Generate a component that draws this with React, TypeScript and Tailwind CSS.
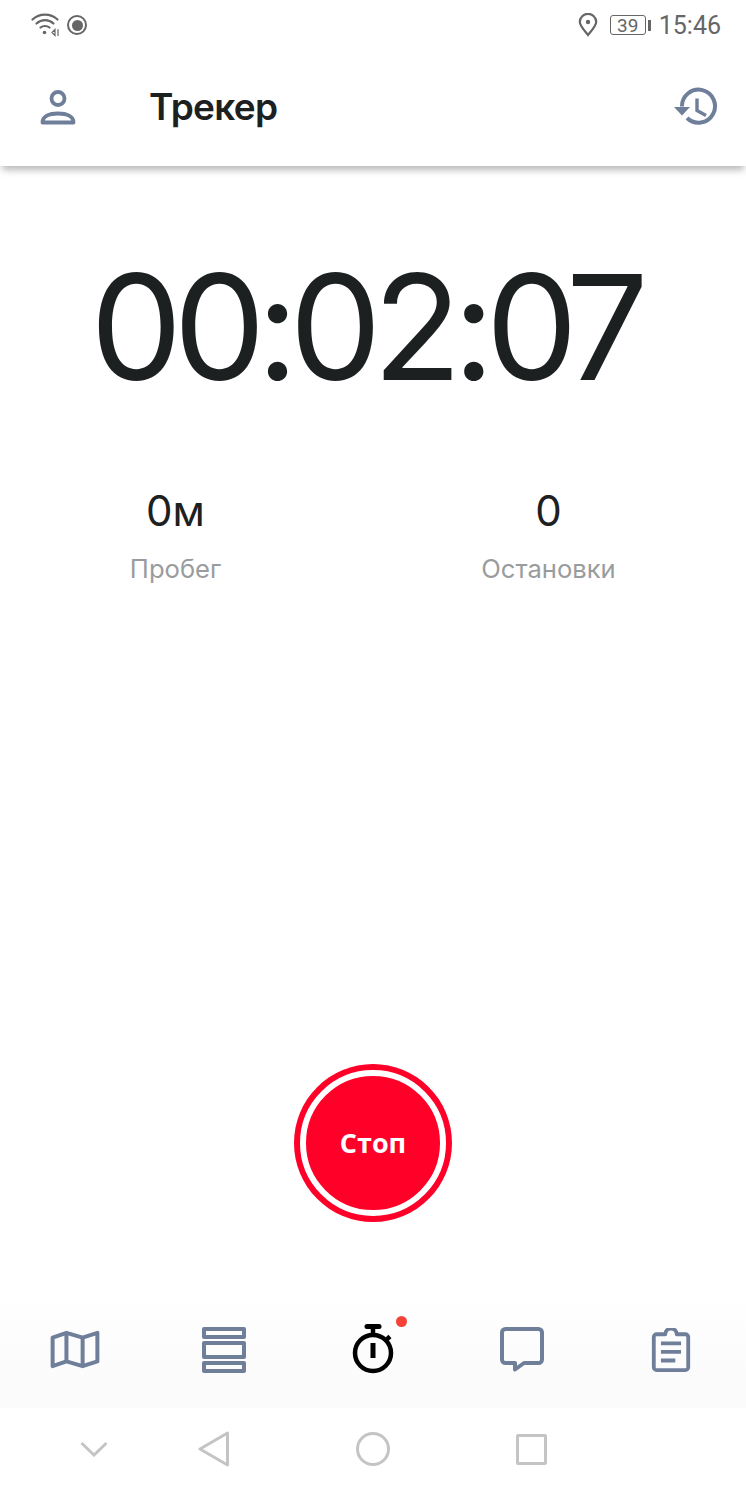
const slate = "#6f7f9a";
const nav = "#c4c4c4";

function StatusBar() {
  return (
    <div className="relative z-10 flex h-[50px] items-center justify-between bg-white pl-[31px] pr-[25px] text-[#666]">
      <div className="flex items-center gap-[8px]">
        <svg width="28" height="24" viewBox="0 0 28 24" fill="none" stroke="#666" strokeWidth="2.2" strokeLinecap="round">
          <path d="M1.5 6.5C8.5 0 19.500 0 26.500 6.500" />
          <path d="M5.500 10.500C10.500 6 17.500 6 22.500 10.500" />
          <path d="M9.500 14.500C12 12.500 16 12.500 18.500 14.500" />
          <circle cx="13.500" cy="19.500" r="1.800" fill="#666" stroke="none" />
          <path d="M21 19.500l3-3v6zM27 16.500v6" strokeWidth="1.200" />
        </svg>
        <span className="flex h-[20px] w-[20px] items-center justify-center rounded-full border-2 border-[#666]">
          <span className="h-[11px] w-[11px] rounded-full bg-[#666]" />
        </span>
      </div>
      <div className="flex items-center">
        <svg width="20" height="24" viewBox="0 0 20 24" fill="none" stroke="#666" strokeWidth="2.200">
          <path d="M10 22C5 16 1.800 12.500 1.800 9a8.200 8.200 0 0 1 16.400 0c0 3.500-3.200 7-8.200 13z" />
          <circle cx="10" cy="9" r="2.200" fill="#666" stroke="none" />
        </svg>
        <div className="ml-[12px] flex h-[20px] w-[36px] items-center justify-center rounded-[3px] border border-[#666] font-['Roboto',sans-serif] text-[19px] leading-none">
          39
        </div>
        <div className="ml-[2px] h-[11px] w-[3px] bg-[#666]" />
        <span className="ml-[8px] font-['Roboto',sans-serif] text-[25px] leading-none">15:46</span>
      </div>
    </div>
  );
}

function Header() {
  return (
    <div className="relative flex h-[116px] items-center justify-between pb-[3px] pl-[40px] pr-[28px] shadow-[0_6px_7px_-2px_rgba(0,0,0,0.28)]">
      <div className="flex items-center">
        <svg width="36" height="36" viewBox="0 0 36 36" fill="none" stroke={slate} strokeWidth="3.800">
          <circle cx="18" cy="9.500" r="6.500" />
          <path d="M2.500 33.500c0-6 6.500-9 15.500-9s15.500 3 15.500 9z" strokeLinejoin="round" />
        </svg>
        <h1 className="ml-[73px] font-['Inter',sans-serif] text-[37px] font-semibold leading-none tracking-[-0.7px] text-[#1d2021]">
          Трекер
        </h1>
      </div>
      <svg width="44" height="40" viewBox="0 0 44 40" fill="none">
        <path d="M8 19.500a16.500 16.500 0 1 1 5 11.500" stroke={slate} strokeWidth="4" />
        <path d="M0 20h16l-8 8.500z" fill={slate} />
        <path d="M23 11.500v12l9 5" stroke={slate} strokeWidth="3.400" />
      </svg>
    </div>
  );
}

function Stat({ value, label }: { value: string; label: string }) {
  return (
    <div className="flex flex-col items-center">
      <div className="font-['Inter',sans-serif] text-[42px] font-normal leading-[50px] text-[#1d2021]">{value}</div>
      <div className="mt-[18px] font-['Inter',sans-serif] text-[25.600px] leading-[30px] text-[#999c9e]">{label}</div>
    </div>
  );
}

function TabBar() {
  return (
    <div className="grid h-[120px] grid-cols-5 items-center justify-items-center bg-gradient-to-b from-white to-[#fafafa] pt-[4px] pr-[1px]">
      <svg width="50" height="40" viewBox="0 0 52 42" fill="none" stroke={slate} strokeWidth="4.200" strokeLinejoin="round">
        <path d="M2.500 8L17 3l17 5 15.500-5v30L34 38l-17-5-14.500 5z" />
        <path d="M17 3v30M34 8v30" />
      </svg>
      <div className="flex w-[44px] flex-col gap-[2px]">
        <div className="h-[12px] rounded-[2px] border-[4px] border-[#6f7f9a]" />
        <div className="h-[18px] rounded-[2px] border-[4px] border-[#6f7f9a]" />
        <div className="h-[12px] rounded-[2px] border-[4px] border-[#6f7f9a]" />
      </div>
      <div className="relative">
        <svg className="block" width="46" height="52" viewBox="0 0 46 52" fill="none" stroke="#000" strokeWidth="4.500">
          <circle cx="23" cy="29" r="18" />
          <path d="M17 2.500h12" strokeWidth="5" strokeLinecap="round" />
          <path d="M23 4v8M36 16l4-3.500" />
          <path d="M23 19v15" strokeWidth="5" />
        </svg>
        <span className="absolute left-[46px] top-[-8px] h-[11px] w-[11px] rounded-full bg-[#f44336]" />
      </div>
      <svg width="44" height="46" viewBox="0 0 44 46" fill="none" stroke={slate} strokeWidth="4" strokeLinejoin="round">
        <path d="M5.500 2h33a3.500 3.500 0 0 1 3.500 3.500v27a3.500 3.500 0 0 1-3.500 3.500H24L15 42.500V36H5.500A3.500 3.500 0 0 1 2 32.500v-27A3.500 3.500 0 0 1 5.500 2z" />
      </svg>
      <svg width="40" height="44" viewBox="0 0 40 46" fill="none" stroke={slate}>
        <path d="M5 6.500h9a6 6 0 0 1 12 0h9a3 3 0 0 1 3 3V41a3 3 0 0 1-3 3H5a3 3 0 0 1-3-3V9.500a3 3 0 0 1 3-3z" strokeWidth="4" strokeLinejoin="round" />
        <path d="M9.500 16h21M9.500 25h21M9.500 34h15" strokeWidth="4" />
      </svg>
    </div>
  );
}

function SystemNav() {
  return (
    <div className="flex h-[84px] items-center pb-[2px] pl-[80px]">
      <svg width="28" height="16" viewBox="0 0 28 16" fill="none" stroke={nav} strokeWidth="3">
        <path d="M1.500 2l12.500 12L26.500 2" />
      </svg>
      <svg className="ml-[90px]" width="32" height="36" viewBox="0 0 32 36" fill="none" stroke={nav} strokeWidth="3" strokeLinejoin="round">
        <path d="M2 18L29.500 2v32z" />
      </svg>
      <div className="ml-[126px] h-[34px] w-[34px] rounded-full border-[3px] border-[#c4c4c4]" />
      <div className="ml-[126px] h-[31px] w-[31px] rounded-[2px] border-[3px] border-[#c4c4c4]" />
    </div>
  );
}

export default function App() {
  return (
    <div className="flex h-[1492px] w-[746px] flex-col overflow-hidden bg-white">
      <StatusBar />
      <Header />
      <div className="flex flex-1 flex-col">
        <div className="mt-[81px] pr-[16px] text-center font-['Inter',sans-serif] text-[146px] font-normal leading-[160px] tracking-[-9px] text-[#1d2021]">
          00:02:07
        </div>
        <div className="mt-[79px] flex">
          <div className="flex w-[351px] justify-center"><Stat value="0м" label="Пробег" /></div>
          <div className="flex w-[395px] justify-center"><Stat value="0" label="Остановки" /></div>
        </div>
        <div className="mt-auto mb-[66px] flex justify-center">
          <div className="flex h-[158px] w-[158px] items-center justify-center rounded-full bg-[#ff0028]">
            <div className="flex h-[146px] w-[146px] items-center justify-center rounded-full border-[6px] border-white">
              <span className="font-['Open_Sans',sans-serif] text-[27px] font-bold text-white">Стоп</span>
            </div>
          </div>
        </div>
      </div>
      <TabBar />
      <SystemNav />
    </div>
  );
}
